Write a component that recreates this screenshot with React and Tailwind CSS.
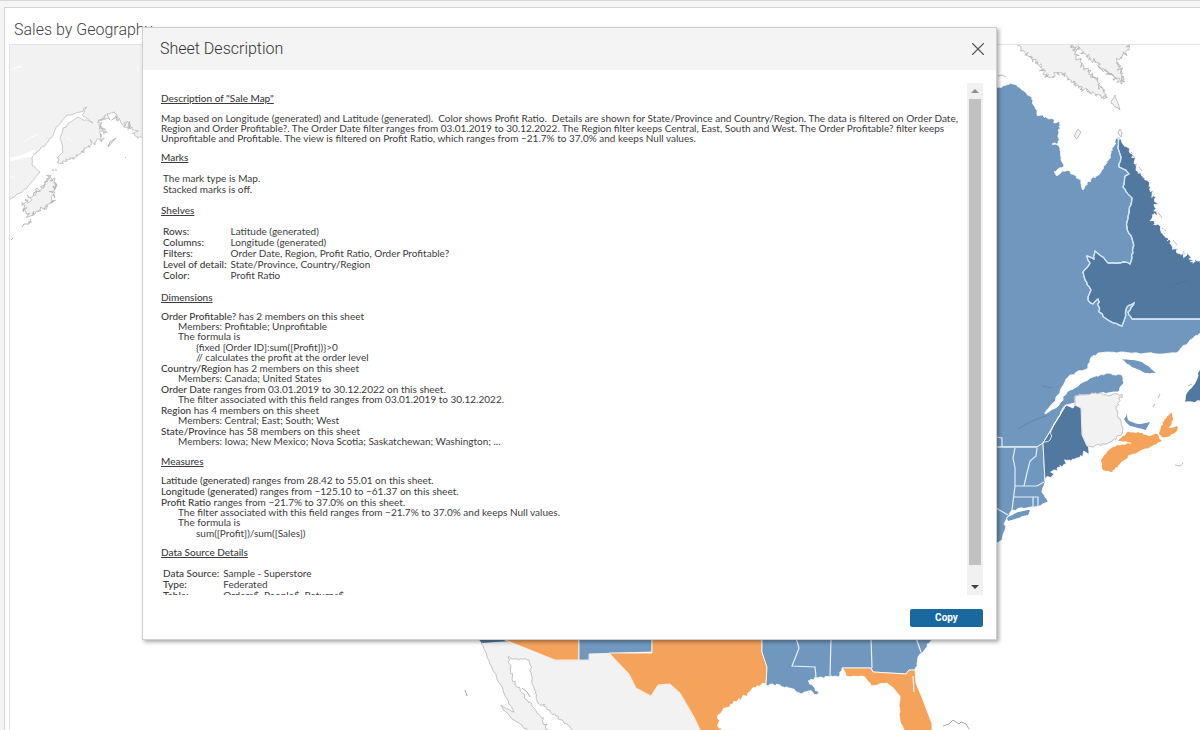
import React from 'react';
import { X } from 'lucide-react';

const LIGHT = '#7098be';
const DARK = '#51789f';
const ORANGE = '#f5a35a';
const LAND = '#f2f2f2';

// Breaks every edge of a point list into short jagged steps, like a coast line.
const rough = (points, amp = 2, step = 3) => {
  const pts = points.split(' ').map((p) => p.split(',').map(Number));
  const out = [pts[0].join(',')];
  let seed = Math.round(pts[0][0] * 7 + pts[0][1] * 13) + 1;
  const random = () => {
    seed = (seed * 16807) % 2147483647;
    return seed / 2147483647 - 0.5;
  };
  random();
  for (let i = 1; i < pts.length; i++) {
    const [x0, y0] = pts[i - 1];
    const [x1, y1] = pts[i];
    const n = Math.max(1, Math.round(Math.hypot(x1 - x0, y1 - y0) / step));
    for (let k = 1; k < n; k++) {
      const x = x0 + ((x1 - x0) * k) / n + random() * amp * 2;
      const y = y0 + ((y1 - y0) * k) / n + random() * amp * 2;
      out.push(`${x.toFixed(1)},${y.toFixed(1)}`);
    }
    out.push(`${x1},${y1}`);
  }
  return out.join(' ');
};

const labradorBorder = rough(
  '1118,137 1118,148 1121,157 1119,167 1126,170 1129,174 1125,176 1123,187 1132,198 1129,213 1127,227 1133,242 1133,253 1130,264 1123,262 1108,263 1101,256 1095,251 1094,259 1087,256 1090,263 1083,272 1085,280 1091,290 1088,300 1093,304 1098,299 1099,312 1108,320 1122,326 1125,318 1127,307 1134,303 1128,312 1132,319',
  1
);
const labradorCoast = `${rough(
  '1200,263 1187,255 1173,247 1163,233 1152,220 1157,207 1153,192 1147,180',
  3,
  1
)} ${rough('1147,180 1138,173 1135,160 1127,147 1118,137', 1.5, 1)}`;
const hudson = rough(
  '996,89 1002,87 1011,82 1018,87 1030,96 1035,107 1037,115 1053,119 1056,123 1061,120 1059,133 1059,143 1052,144 1059,146 1061,160 1064,166 1054,172 1057,176 1062,171 1070,171 1079,179 1083,190 1087,183 1098,175 1107,163 1111,153 1118,137',
  1.5,
  2
);
const lawrence = rough(
  '1200,333 1190,340 1178,352 1157,354 1123,352 1098,353 1090,360 1088,368 1070,375 1062,387 1053,403 1045,413',
  1
);
const gaspe = rough('1045,414 1057,407 1067,392 1090,378 1107,373 1122,375 1124,383 1118,392 1100,393 1083,395 1075,396', 1);
const maineBorder = rough('1066,405 1062,410 1053,427 1050,440 1043,443', 1);
const brunswickCoast = rough('1075,396 1083,395 1100,393 1108,396 1122,394 1116,410 1122,427 1123,433 1110,442 1093,447', 1.5, 2);
const maineCoast = rough('1087,446 1089,452 1070,460 1057,468 1045,481', 2.5, 2);
const gulf = rough('766,685 780,685 790,688 801,694 809,691 821,695 813,686 808,681 821,677 839,677 842,668', 1.5, 2);
const georgiaCoast = rough('915,670 918,657 926,648 936,636', 1.5, 2);
const rioGrande = '609,653 629,674 636,688 651,696 658,685 670,684 680,693 694,717 702,734';

const Land = ({ points }) => (
  <polygon points={points} fill={LAND} stroke="#b4b4b4" strokeWidth="0.8" />
);

const Region = ({ points, fill }) => (
  <polygon points={points} fill={fill} stroke="#fff" strokeOpacity="0.8" strokeWidth="1" />
);

const SalesMap = () => (
  <svg
    viewBox="10 45 1190 685"
    preserveAspectRatio="xMinYMin slice"
    className="block h-full w-full"
    role="img"
    aria-label="Map of sales by state and province"
  >
    {/* Alaska */}
    <polygon
      points={`0,36 200,36 200,138 ${rough('139,137 130,127 117,118 108,114 100,123 104,132 100,140 92,144', 4, 1)} ${rough('92,144 78,155 60,164 57,158', 2, 1)} ${rough('57,158 63,152 60,138 63,128 78,117 93,123 82,115 87,107 80,112 67,115 55,130 48,142 33,155 32,165 40,172 27,188 10,200 0,206', 1)}`}
      fill={LAND}
      stroke="#b4b4b4"
      strokeWidth="0.7"
    />
    <Land points={rough('50,177 57,185 52,192 53,202 40,210 28,215 23,205 33,195 42,188 50,177', 3, 1)} />
    <path d="M31 219l-2 5-5 0-2 3m6-5l4 0M108 147l8-9-6 4zM11 240l2-2M52 170h2m1 0h2M125 157l1 1" fill="none" stroke="#b4b4b4" />
    <path d="M11 158q12-2 24-8l-3 6q-9 1-21 5zM24 142q6-5 14-8M10 177h4M67 137l4 4M12 70q2-3 10-4" fill="#fff" stroke="#fff" strokeWidth="1" />

    {/* Baffin Island */}
    <Land points={rough('1018,40 1070,40 1080,62 1097,80 1105,95 1105,98 1083,90 1062,73 1047,77 1037,63 1018,46', 2.5, 1)} />
    <Land points={rough('1070,40 1127,40 1127,50 1118,62 1124,80 1121,84 1115,77 1100,67 1083,53 1070,40', 3, 1)} />
    <Land points={rough('1115,95 1120,110 1111,103 1115,95', 1)} />
    <Land points="1078,129 1081,132 1077,139 1074,136" />
    <path d="M998 76l4-1 4 2M1118 133l2-4 2 4-1 4zM1158 398l2-4M1153 407l2-3M1175 465l5 1 3-3M1188 386l4-2M1131 152l3 5M1139 167l3 4M1158 212l4 6M1162 228l4 3M1173 240l4 5" fill="none" stroke="#bbb" />

    {/* Quebec and Labrador */}
    <Region
      fill={LIGHT}
      points={`980,89 ${hudson} ${labradorBorder} 1210,319 1210,333 ${lawrence} ${gaspe} 1075,403 ${maineBorder} 1037,447 980,447`}
    />
    <Region fill={DARK} points={`${labradorBorder} 1210,319 1210,268 ${labradorCoast}`} />
    <polyline points={`${labradorBorder} 1210,319`} fill="none" stroke="#cfe5f7" strokeWidth="1.4" />
    <path d="M1170 291q5-9 18-10l6-6M1018 429l14-8 16-6M1042 386l10 2" fill="none" stroke="#456d94" strokeOpacity="0.4" />
    <polygon fill={LIGHT} points={rough('1122,359 1130,360 1142,362 1156,373 1146,373 1132,367 1122,359', 0.5)} />

    {/* Maritimes and Newfoundland */}
    <Land points={`${brunswickCoast} 1087,446 1082,435 1081,408 1075,405`} />
    <polygon fill={LIGHT} points={rough('1127,413 1128,420 1138,424 1150,422 1146,430 1138,428 1130,426 1124,419 1127,413', 0.5)} />
    <polygon fill={ORANGE} points={rough('1127,432 1140,433 1148,436 1157,434 1162,441 1150,447 1140,451 1130,455 1120,464 1112,472 1103,470 1101,460 1108,451 1117,445 1134,443 1118,441 1127,432', 0.8, 2)} />
    <polygon fill={ORANGE} points={rough('1171,412 1173,420 1169,428 1177,426 1177,431 1168,437 1162,437 1159,434 1161,426 1171,412', 0.8, 2)} />
    <polygon fill={DARK} points={rough('1210,364 1200,370 1195,384 1186,395 1185,402 1210,400', 1)} />

    {/* New England */}
    <Region
      fill={LIGHT}
      points={`980,447 1037,447 1043,443 1045,482 ${rough('1045,482 1042,492 1048,502 1040,506 1012,510 1005,522 1005,530 1002,540 990,546', 1)}`}
    />
    <Region fill={DARK} points={`1066,405 1073,408 1075,405 1081,408 1082,435 ${maineCoast} 1043,443 ${maineBorder}`} />
    <polygon fill={LIGHT} points={rough('1007,518 1018,512 1030,510 1028,515 1008,521', 0.5)} />
    <path
      d="M990 447H1037M1015 448L1013 458L1015 468L1015 486L1012 510M1037 448L1036 456L1030 461L1027 473L1024 486M1015 486H1037L1044 482M1013 497H1038V506M1033 497V508M996 508L1008 515M997 437L1002 438V447"
      fill="none"
      stroke="#e0effa"
      strokeWidth="1.2"
    />

    {/* Mexico */}
    <Land
      points={`481,641 510,641 555,660 589,660 589,653 ${rioGrande} 577,734 ${rough('577,734 556,716 537,700 532,679 529,660 508,657 512,679 527,700 543,720 550,734', 1.5, 2)} ${rough('534,734 512,719 501,705 514,712 508,700 494,672 481,641', 1)}`}
    />
    <path d="M465 690l2 6M522 688l5 4 3 5M943 726l6-2 4-4 6 4 2-2 5 2 3 5" fill="none" stroke="#aaa" />

    {/* Southern states */}
    <polygon fill={DARK} points="470,630 520,630 510,641 482,643" />
    <Region fill={ORANGE} points="500,638 579,638 579,660 555,660" />
    <Region fill={LIGHT} points="579,630 652,630 652,652 589,654 589,660 579,660" />
    <Region
      fill={ORANGE}
      points={`652,630 762,630 762,652 767,667 ${rough('766,684 753,688 742,698 723,710 718,719 721,734', 2, 2)} 702,734 694,717 680,693 670,684 658,685 651,696 636,688 629,674 609,653 652,653`}
    />
    <Region fill={LIGHT} points={`762,630 762,652 767,667 ${gulf} 871,668 873,672 906,674 909,670 ${georgiaCoast}`} />
    <Region
      fill={ORANGE}
      points={`842,668 871,668 873,672 906,674 909,670 915,670 916,683 923,700 932,724 932,734 905,734 ${rough('905,734 899,714 900,696 887,683 871,686 865,677 846,676 842,668', 1)}`}
    />
    <path
      d="M796 638L799 648L796 656L792 666L815 667L816 677M831 638L830 676M871 638L872 668M916 638L921 652M913 676L914 692"
      fill="none"
      stroke="#e8f2fa"
      strokeWidth="1.2"
    />
  </svg>
);

const Heading = ({ children }) => (
  <h3 className="leading-[10px] font-medium underline underline-offset-1">{children}</h3>
);

const Facts = ({ rows }) => (
  <table className="ml-0.5 border-separate border-spacing-0 text-left leading-[11px]">
    <tbody>
      {rows.map(([name, value]) => (
        <tr key={name}>
          <th scope="row" className="p-0 pr-1 font-medium">{name}</th>
          <td className="p-0">{value}</td>
        </tr>
      ))}
    </tbody>
  </table>
);

const Field = ({ name, summary, lines = [], formula = [] }) => (
  <div>
    <p><span className="font-medium">{name}</span> {summary}</p>
    {lines.map((text) => <p key={text} className="pl-[17px]">{text}</p>)}
    {formula.length > 0 && (
      <div className="pt-px pl-[35px]">
        {formula.map((text) => <p key={text}>{text}</p>)}
      </div>
    )}
  </div>
);

const shelves = [
  ['Rows:', 'Latitude (generated)'],
  ['Columns:', 'Longitude (generated)'],
  ['Filters:', 'Order Date, Region, Profit Ratio, Order Profitable?'],
  ['Level of detail:', 'State/Province, Country/Region'],
  ['Color:', 'Profit Ratio'],
];

const dimensions = [
  {
    name: 'Order Profitable?',
    summary: 'has 2 members on this sheet',
    lines: ['Members: Profitable; Unprofitable', 'The formula is'],
    formula: ['{fixed [Order ID]:sum([Profit])}>0', '// calculates the profit at the order level'],
  },
  { name: 'Country/Region', summary: 'has 2 members on this sheet', lines: ['Members: Canada; United States'] },
  {
    name: 'Order Date',
    summary: 'ranges from 03.01.2019 to 30.12.2022 on this sheet.',
    lines: ['The filter associated with this field ranges from 03.01.2019 to 30.12.2022.'],
  },
  { name: 'Region', summary: 'has 4 members on this sheet', lines: ['Members: Central; East; South; West'] },
  {
    name: 'State/Province',
    summary: 'has 58 members on this sheet',
    lines: ['Members: Iowa; New Mexico; Nova Scotia; Saskatchewan; Washington; ...'],
  },
];

const measures = [
  { name: 'Latitude (generated)', summary: 'ranges from 28.42 to 55.01 on this sheet.' },
  { name: 'Longitude (generated)', summary: 'ranges from −125.10 to −61.37 on this sheet.' },
  {
    name: 'Profit Ratio',
    summary: 'ranges from −21.7% to 37.0% on this sheet.',
    lines: [
      'The filter associated with this field ranges from −21.7% to 37.0% and keeps Null values.',
      'The formula is',
    ],
    formula: ['sum([Profit])/sum([Sales])'],
  },
];

const sources = [
  ['Data Source:', 'Sample - Superstore'],
  ['Type:', 'Federated'],
  ['Table:', 'Orders$, People$, Returns$'],
];

const ScrollBar = () => (
  <div className="flex w-4 shrink-0 flex-col items-center bg-[#f1f1f1]">
    <button type="button" aria-label="Scroll up" className="flex h-4 w-full items-center justify-center">
      <svg viewBox="0 0 8 4" className="h-1 w-2"><path d="M0 4L4 0L8 4z" fill="#8f8f8f" /></svg>
    </button>
    <div className="w-3 flex-1 bg-[#c1c1c1]" />
    <div className="h-3.5" />
    <button type="button" aria-label="Scroll down" className="flex h-4 w-full items-center justify-center">
      <svg viewBox="0 0 8 4" className="h-1 w-2"><path d="M0 0L4 4L8 0z" fill="#444" /></svg>
    </button>
  </div>
);

const DescriptionDialog = () => (
  <div
    role="dialog"
    aria-labelledby="dialog-title"
    className="absolute top-[27px] right-[203px] left-[142px] border border-[#cfcfcf] bg-white shadow-[2px_2px_4px_rgba(0,0,0,0.35)]"
  >
    <div className="flex h-[42px] items-center justify-between bg-[#f4f4f4] pr-[7px] pl-[17px]">
      <h2 id="dialog-title" className="text-base font-light text-[#333]">Sheet Description</h2>
      <button type="button" aria-label="Close">
        <X className="h-[22px] w-[22px] text-[#555]" strokeWidth={1.25} />
      </button>
    </div>

    <div className="mt-[13px] mr-[13px] ml-[18px] flex h-[512px]">
      <div className="min-w-0 flex-1 overflow-hidden pt-[10px] font-[Lato,sans-serif] text-[10px] leading-[10px] text-[#3c3c3c]">
        <Heading>Description of "Sale Map"</Heading>
        <p className="mt-[10px] mb-[9px] pr-1">
          Map based on Longitude (generated) and Latitude (generated).&nbsp; Color shows Profit Ratio.&nbsp; Details are
          shown for State/Province and Country/Region. The data is filtered on Order Date, Region and Order
          Profitable?. The Order Date filter ranges from 03.01.2019 to 30.12.2022. The Region filter keeps Central, East,
          South and West. The Order Profitable? filter keeps Unprofitable and Profitable. The view is filtered on Profit
          Ratio, which ranges from −21.7% to 37.0% and keeps Null values.
        </p>

        <Heading>Marks</Heading>
        <div className="mt-[11px] mb-[10px] ml-0.5 leading-[11px]">
          <p>The mark type is Map.</p>
          <p>Stacked marks is off.</p>
        </div>

        <Heading>Shelves</Heading>
        <div className="mt-[11px] mb-[11px]">
          <Facts rows={shelves} />
        </div>

        <Heading>Dimensions</Heading>
        <div className="mt-[9px] mb-[10px] flex flex-col gap-px">
          {dimensions.map((field) => <Field key={field.name} {...field} />)}
        </div>

        <Heading>Measures</Heading>
        <div className="mt-[9px] mb-[9px] flex flex-col gap-px">
          {measures.map((field) => <Field key={field.name} {...field} />)}
        </div>

        <Heading>Data Source Details</Heading>
        <div className="mt-[11px]">
          <Facts rows={sources} />
        </div>
      </div>
      <ScrollBar />
    </div>

    <div className="flex justify-end pt-[14px] pr-[13px] pb-3">
      <button type="button" className="h-[18px] w-[73px] rounded-xs bg-[#1a699e] text-[10px] leading-[18px] font-bold text-white">
        Copy
      </button>
    </div>
  </div>
);

const App = () => {
  return (
    <div className="relative h-screen overflow-hidden bg-[#f5f5f5] font-[Roboto,sans-serif]">
      <div className="flex h-full flex-col border-t border-[#d8d8d8] pt-1.5 pl-1">
        <main className="flex min-h-0 flex-1 flex-col border-t border-l border-[#d4d4d4] bg-white pl-1">
          <h1 className="h-9 pt-2.5 pl-[5px] text-base leading-6 font-light text-[#444]">Sales by Geography</h1>
          <div className="min-h-0 flex-1 border-t border-l border-[#e2e2e2]">
            <SalesMap />
          </div>
        </main>
      </div>
      <DescriptionDialog />
    </div>
  );
};

export default App;
